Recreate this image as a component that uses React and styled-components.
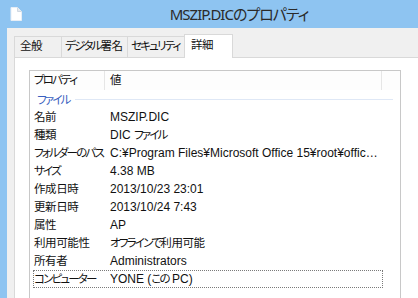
import React from 'react';
import styled, { createGlobalStyle } from 'styled-components';

const GlobalStyle = createGlobalStyle`
  html, body {
    margin: 0;
    padding: 0;
    overflow: hidden;
  }
  body {
    font-family: "Liberation Sans", "Noto Sans CJK JP", sans-serif;
    font-feature-settings: "palt";
  }
`;

const Window = styled.div`
  width: 418px;
  height: 298px;
  background: #8ec4f1;
  display: flex;
  flex-direction: column;
  overflow: hidden;
`;

const TitleBar = styled.div`
  height: 28px;
  flex: none;
  display: flex;
  align-items: flex-start;
  padding-left: 10px;
  box-sizing: border-box;
  padding-top: 7px;
`;

const Title = styled.div`
  flex: 1;
  text-align: center;
  padding-left: 38px;
  margin-top: -2px;
  font-family: "Noto Sans", "Noto Sans CJK JP", sans-serif;
  font-size: 15px;
  line-height: 18px;
  color: #2a2a2a;
  letter-spacing: -1px;
`;

const Client = styled.div`
  flex: 1;
  margin-left: 7px;
  background: #f0f0f0;
  padding: 6px 0 0 7px;
  display: flex;
  flex-direction: column;
  min-height: 0;
`;

const TabStrip = styled.div`
  display: flex;
  align-items: flex-end;
  height: 23px;
  flex: none;
`;

const Tab = styled.div`
  box-sizing: border-box;
  width: ${p => p.$w}px;
  height: ${p => (p.$active ? 24 : 21)}px;
  margin-bottom: ${p => (p.$active ? -1 : 0)}px;
  background: ${p => (p.$active ? '#fff' : '#f0f0f0')};
  border: 1px solid #d9d9d9;
  border-bottom: none;
  margin-left: ${p => (p.$first ? 0 : -1)}px;
  padding: ${p => (p.$active ? '2px' : '1px')} 0 0 ${p => p.$pad}px;
  font-size: 11.5px;
  line-height: 17px;
  color: #111;
  white-space: nowrap;
  overflow: hidden;
  position: relative;
  z-index: ${p => (p.$active ? 1 : 0)};
`;

const Panel = styled.div`
  flex: 1;
  background: #fff;
  border-left: 1px solid #d9d9d9;
  border-top: 1px solid #d9d9d9;
  padding: 12px 0 0 14px;
  display: flex;
  min-height: 0;
`;

const ListBox = styled.div`
  width: 372px;
  box-sizing: border-box;
  border: 1px solid #c8c8c8;
  border-bottom: none;
  font-size: 12px;
  color: #111;
`;

const HeaderRow = styled.div`
  display: grid;
  grid-template-columns: 75px 277px 1fr;
  height: 19px;
  background: #fdfdfd;
`;

const HeaderCell = styled.div`
  border-right: 1px solid #e6e6e6;
  padding-left: ${p => p.$pad}px;
  line-height: 19px;
  font-size: 11.5px;
  &:last-child { border-right: none; }
`;

const Group = styled.div`
  height: 18px;
  display: flex;
  align-items: center;
  padding-left: 7px;
  padding-right: 7px;
  gap: 5px;
  color: #3a5fc0;
  font-size: 11.5px;
  white-space: nowrap;
  &::after {
    content: '';
    flex: 1;
    height: 1px;
    background: #dfe8f6;
  }
`;

const Row = styled.div`
  display: grid;
  grid-template-columns: 75px 277px;
  height: 18px;
  line-height: 16px;
  box-sizing: border-box;
  margin-left: 3px;
  width: 350px;
  border: 1px ${p => (p.$focused ? 'dotted #7a7a7a' : 'solid transparent')};
`;

const Label = styled.div`
  font-size: 11.5px;
  white-space: nowrap;
`;

const Value = styled.div`
  padding-left: 1px;
  padding-right: 6px;
  white-space: nowrap;
  overflow: hidden;
  text-overflow: ellipsis;
`;

const Kana = styled.span`
  font-size: 11.5px;
  letter-spacing: -1.8px;
`;

const Kanji = styled.span`
  font-size: 11.5px;
  letter-spacing: -0.4px;
`;

const DocIcon = () => (
  <svg width="12" height="14" viewBox="0 0 12 14">
    <path d="M1 0.5 H7.5 L11.5 4.5 V13.5 H1 Z" fill="#fff" stroke="#e8eef5" strokeWidth="1" />
    <path d="M7.5 0.5 V4.5 H11.5" fill="#e4e9ef" stroke="#d0d8e2" strokeWidth="1" />
  </svg>
);

// Meiryo UI sets kana much narrower than Noto, so kana and kanji runs get their own spacing
const jp = (text) =>
  text.split(/([\u3040-\u30ff]+|[\u4e00-\u9fff]+)/).map((part, i) => {
    if (/[\u3040-\u30ff]/.test(part)) return <Kana key={i}>{part}</Kana>;
    if (/[\u4e00-\u9fff]/.test(part)) return <Kanji key={i}>{part}</Kanji>;
    return part;
  });

const rows = [
  ['名前', 'MSZIP.DIC'],
  ['種類', 'DIC ファイル'],
  ['フォルダーのパス', 'C:¥Program Files¥Microsoft Office 15¥root¥office15¥proof'],
  ['サイズ', '4.38 MB'],
  ['作成日時', '2013/10/23 23:01'],
  ['更新日時', '2013/10/24 7:43'],
  ['属性', 'AP'],
  ['利用可能性', 'オフラインで利用可能'],
  ['所有者', 'Administrators'],
  ['コンピューター', 'YONE (この PC)'],
];

const tabs = [
  { label: '全般', w: 48, pad: 5 },
  { label: 'デジタル署名', w: 67, pad: 3 },
  { label: 'セキュリティ', w: 58, pad: 3 },
  { label: '詳細', w: 49, pad: 6, active: true },
];

export default function App() {
  return (
    <Window>
      <GlobalStyle />
      <TitleBar>
        <DocIcon />
        <Title>MSZIP.DICのプロパティ</Title>
      </TitleBar>
      <Client>
        <TabStrip>
          {tabs.map((t, i) => (
            <Tab key={t.label} $w={t.w} $pad={t.pad} $active={t.active} $first={i === 0}>{jp(t.label)}</Tab>
          ))}
        </TabStrip>
        <Panel>
          <ListBox>
            <HeaderRow>
              <HeaderCell $pad={4}>{jp('プロパティ')}</HeaderCell>
              <HeaderCell $pad={5}>{jp('値')}</HeaderCell>
              <HeaderCell />
            </HeaderRow>
            <Group>{jp('ファイル')}</Group>
            {rows.map(([k, v], i) => (
              <Row key={k} $focused={i === rows.length - 1}>
                <Label>{jp(k)}</Label>
                <Value>{jp(v)}</Value>
              </Row>
            ))}
          </ListBox>
        </Panel>
      </Client>
    </Window>
  );
}
